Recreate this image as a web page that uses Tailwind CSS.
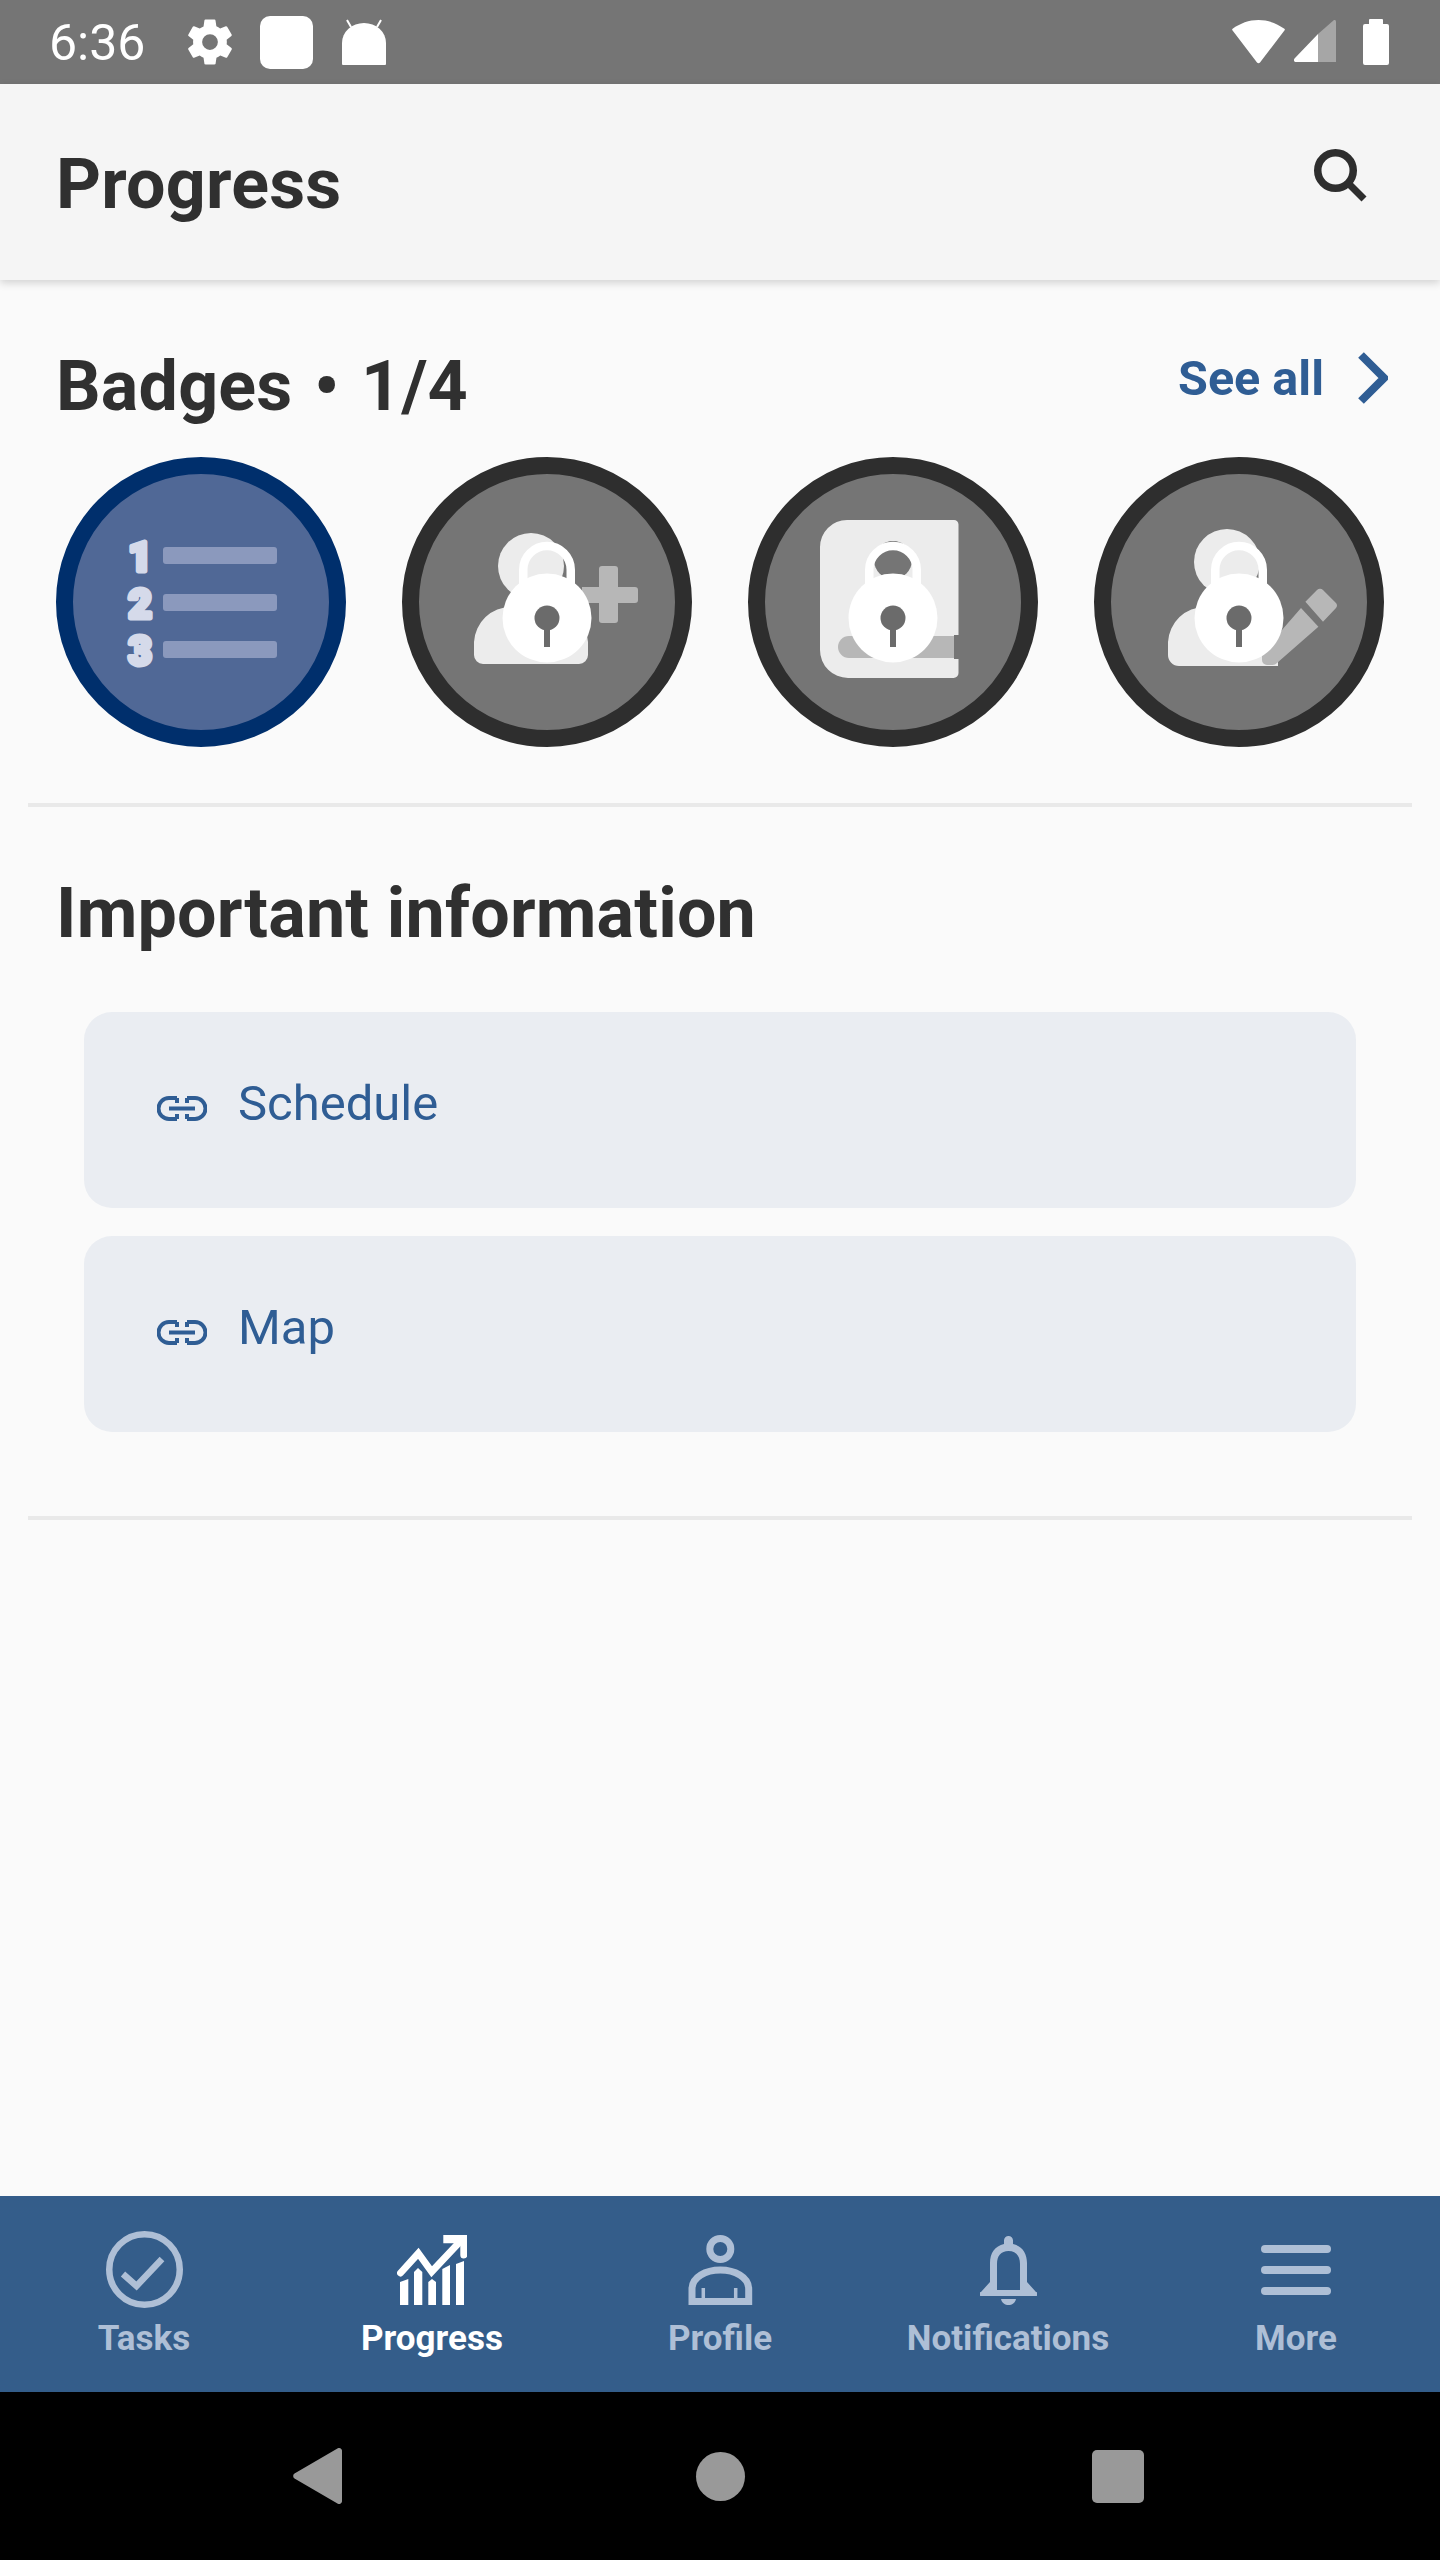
<!DOCTYPE html>
<html lang="en">
<head>
  <meta charset="UTF-8">
  <title>Progress</title>
  <script src="https://cdn.jsdelivr.net/npm/@tailwindcss/browser@4"></script>
</head>
<body class="bg-[#fafafa]">
  <!-- shared lock for the locked badges -->
  <svg class="hidden" width="0" height="0">
    <defs>
      <g id="lock">
        <path d="M121.250 140 V112.750 a23.750 23.750 0 0 1 47.500 0 V140" fill="none" stroke="#fff" stroke-width="8.500"/>
        <circle cx="145" cy="161" r="44.500" fill="#fff"/>
        <circle cx="145" cy="161" r="12.500" fill="#6b6b6b"/>
        <rect x="142" y="165" width="6" height="25" fill="#6b6b6b"/>
      </g>
    </defs>
  </svg>

  <div class="w-[1440px] h-[2560px] flex flex-col font-['Roboto',sans-serif] overflow-hidden">
    <!-- status bar -->
    <div class="h-[84px] bg-[#757575] flex items-center pl-[49px] pr-[51px] text-white shrink-0">
      <span class="text-[50px] leading-[84px] w-[96px] mt-[2px]">6:36</span>
      <svg class="ml-[38px]" width="54" height="54" viewBox="0 0 24 24" fill="#fff"><path fill-rule="evenodd" d="M19.400 13c.05-.33.08-.66.08-1s-.03-.67-.08-1l2.100-1.650c.2-.15.25-.42.12-.64l-2-3.460c-.12-.22-.39-.3-.61-.22l-2.490 1c-.52-.4-1.080-.73-1.690-.98l-.38-2.650A.49.49 0 0 0 14 2h-4c-.25 0-.46.18-.49.42l-.38 2.650c-.61.25-1.170.59-1.690.98l-2.490-1a.5.5 0 0 0-.61.22l-2 3.460c-.13.22-.07.49.12.64L4.560 11c-.05.33-.08.67-.08 1s.03.67.08 1l-2.100 1.650c-.2.15-.25.42-.12.64l2 3.460c.12.22.39.3.61.22l2.490-1c.52.4 1.080.73 1.690.98l.38 2.650c.03.24.24.42.49.42h4c.25 0 .46-.18.49-.42l.38-2.650c.61-.25 1.170-.59 1.690-.98l2.490 1c.23.09.49 0 .61-.22l2-3.460c.13-.22.07-.49-.12-.64L19.400 13zM12 15.500a3.500 3.500 0 1 1 0-7 3.500 3.500 0 0 1 0 7z"/></svg>
      <div class="ml-[23px] w-[53px] h-[53px] bg-white rounded-[10px]"></div>
      <svg class="ml-[29px]" width="44" height="46" viewBox="0 0 44 46" fill="#fff"><path d="M0 45 V24 a22 20 0 0 1 44 0 V45 a1 1 0 0 1 -1 1 H1 a1 1 0 0 1 -1 -1z"/><path d="M9 8 L5 1 M35 8 L39 1" stroke="#fff" stroke-width="2" fill="none"/></svg>

      <svg class="ml-auto" width="53" height="44" viewBox="0 0 53 44" fill="#fff"><path d="M0.600 8.800 C8 3.400 17 0 26.500 0 S45 3.400 52.400 8.800 C53 9.300 53 9.800 52.600 10.300 L28 42.600 C27.200 43.600 25.800 43.600 25 42.600 L0.400 10.300 C0 9.800 0 9.300 .6 8.800z"/></svg>
      <svg class="ml-[9px]" width="42" height="44" viewBox="0 0 42 44"><path d="M24 14 L1 38 C-1 40 0 42 2 42 H24z" fill="#fff"/><path d="M24 14 L40 0 C41 -.5 42 .5 42 2 V42 H24z" fill="#a6a6a6"/></svg>
      <svg class="ml-[27px]" width="26" height="46" viewBox="0 0 26 46" fill="#fff"><path d="M6 5 V1 a1 1 0 0 1 1 -1 H19 a1 1 0 0 1 1 1 V5 H24 a2 2 0 0 1 2 2 V44 a2 2 0 0 1 -2 2 H2 a2 2 0 0 1 -2 -2 V7 a2 2 0 0 1 2 -2z"/></svg>
    </div>

    <!-- app bar -->
    <div class="h-[196px] bg-[#f5f5f5] flex items-center justify-between pl-[56px] pr-[73px] shrink-0 shadow-[0_3px_8px_rgba(0,0,0,0.16)] relative">
      <h1 class="text-[70px] leading-[84px] font-bold tracking-[0.2px] text-[#303030] mt-[4px]">Progress</h1>
      <svg class="mb-[14px]" width="53" height="53" viewBox="0 0 53 53" fill="none" stroke="#2e2e2e"><circle cx="21.500" cy="21.500" r="17.750" stroke-width="7.500"/><path d="M34 34 L50 50" stroke-width="7"/></svg>
    </div>

    <!-- badges -->
    <section class="pt-[64px]">
      <div class="flex justify-between pl-[56px] pr-[52px] h-[85px]">
        <h2 class="text-[70px] leading-[84px] font-bold tracking-[0.2px] text-[#303030]">Badges <span class="ml-[4px] mr-[4px]">•</span> 1/4</h2>
        <div class="flex items-start text-[#2f5d94]">
          <span class="text-[48.500px] leading-[56px] font-bold mt-[7px]">See all</span>
          <svg class="ml-[34px] mt-[8px]" width="30" height="52" viewBox="0 0 30 52" fill="none" stroke="#2f5d94" stroke-width="8"><path d="M3 3 L26 26 L3 49"/></svg>
        </div>
      </div>
      <div class="flex gap-[56px] pl-[56px] mt-[28px]">
        <svg width="290" height="290" viewBox="0 0 290 290">
          <circle cx="145" cy="145" r="136.500" fill="#506896" stroke="#002f6c" stroke-width="17"/>
          <rect x="107" y="90" width="114" height="17" rx="3" fill="#8b99bd"/>
          <rect x="107" y="137" width="114" height="17" rx="3" fill="#8b99bd"/>
          <rect x="107" y="184" width="114" height="17" rx="3" fill="#8b99bd"/>
          <g fill="#d5daea" stroke="#d5daea" stroke-width="5" stroke-linejoin="round" font-size="40" font-weight="900" text-anchor="middle">
            <text x="84" y="113.500">1</text>
            <text x="84" y="160.500">2</text>
            <text x="84" y="207.500">3</text>
          </g>
        </svg>
        <svg width="290" height="290" viewBox="0 0 290 290">
          <circle cx="145" cy="145" r="136.500" fill="#757575" stroke="#2e2e2e" stroke-width="17"/>
          <path d="M72 198 V185 a37 37 0 0 1 37 -35 h40 a37 37 0 0 1 37 35 V198 a9 9 0 0 1 -9 9 H81 a9 9 0 0 1 -9 -9z" fill="#ececec"/>
          <circle cx="129" cy="109" r="33" fill="#ececec"/>
          <path d="M197 112 a3 3 0 0 1 3 -3 h13 a3 3 0 0 1 3 3 v18 h17 a3 3 0 0 1 3 3 v10 a3 3 0 0 1 -3 3 h-17 v17 a3 3 0 0 1 -3 3 h-13 a3 3 0 0 1 -3 -3 v-17 h-17 v-16 h17z" fill="#b7b7b7"/>
          <use href="#lock"/>
        </svg>
        <svg width="290" height="290" viewBox="0 0 290 290">
          <circle cx="145" cy="145" r="136.500" fill="#757575" stroke="#2e2e2e" stroke-width="17"/>
          <path d="M72 90 a27 27 0 0 1 27 -27 H206 a4.500 4.500 0 0 1 4.500 4.500 V216 a5 5 0 0 1 -5 5 H100 a28 28 0 0 1 -28 -28z" fill="#ececec"/>
          <rect x="206" y="178" width="6" height="24" fill="#757575"/>
          <path d="M101 179 H206 V201 H101 a11 11 0 0 1 0 -22z" fill="#b7b7b7"/>
          <circle cx="145" cy="103" r="19" fill="#757575"/>
          <use href="#lock"/>
        </svg>
        <svg width="290" height="290" viewBox="0 0 290 290">
          <circle cx="145" cy="145" r="136.500" fill="#757575" stroke="#2e2e2e" stroke-width="17"/>
          <path d="M74 198 V185 a37 37 0 0 1 37 -35 h40 a37 37 0 0 1 33 25 V209 H85 a11 11 0 0 1 -11 -11z" fill="#ececec"/>
          <circle cx="133" cy="105" r="33" fill="#ececec"/>
          <path d="M207 151 L224.400 169.700 L183 206 a6 6 0 0 1 -5 2 H173 a5 5 0 0 1 -5 -5 V196z" fill="#b7b7b7"/>
          <path d="M211.400 144.700 L223 133 a4 4 0 0 1 6 0 L242 146 a4 4 0 0 1 0 5 L229 164.700z" fill="#b7b7b7"/>
          <use href="#lock"/>
        </svg>
      </div>
      <div class="h-[4px] bg-[#e9e9e9] mx-[28px] mt-[56px]"></div>
    </section>

    <!-- important information -->
    <section>
      <h2 class="text-[70px] leading-[84px] font-bold tracking-[0.2px] text-[#303030] pl-[56px] mt-[64px]">Important information</h2>
      <div class="flex flex-col gap-[28px] mx-[84px] mt-[57px]">
        <a class="h-[196px] bg-[#eaedf2] rounded-[28px] flex items-start pl-[73px] text-[#2f5d94]">
          <svg class="mt-[84px]" width="50" height="25" viewBox="0 0 50 25" fill="none" stroke="#2f5d94" stroke-width="4"><path d="M20 2 H12 a10.500 10.500 0 0 0 0 21 H20 M30 2 H38 a10.500 10.500 0 0 1 0 21 H30 M12 12.500 H38"/><path d="M20 2 v5 M30 2 v5 M20 23 v-5 M30 23 v-5"/></svg>
          <span class="text-[49px] leading-[60px] ml-[31px] mt-[62px]">Schedule</span>
        </a>
        <a class="h-[196px] bg-[#eaedf2] rounded-[28px] flex items-start pl-[73px] text-[#2f5d94]">
          <svg class="mt-[84px]" width="50" height="25" viewBox="0 0 50 25" fill="none" stroke="#2f5d94" stroke-width="4"><path d="M20 2 H12 a10.500 10.500 0 0 0 0 21 H20 M30 2 H38 a10.500 10.500 0 0 1 0 21 H30 M12 12.500 H38"/><path d="M20 2 v5 M30 2 v5 M20 23 v-5 M30 23 v-5"/></svg>
          <span class="text-[49px] leading-[60px] ml-[31px] mt-[62px]">Map</span>
        </a>
      </div>
      <div class="h-[4px] bg-[#e9e9e9] mx-[28px] mt-[84px]"></div>
    </section>

    <!-- tab bar -->
    <nav class="mt-auto h-[196px] bg-[#345d8a] grid grid-cols-5 shrink-0 text-[#aebfd6] text-[35px] leading-[42px] font-bold text-center">
      <div class="flex flex-col items-center pt-[35px]">
        <svg width="77" height="77" viewBox="0 0 77 77" fill="none" stroke="#aebfd6" stroke-width="6.500"><circle cx="38.500" cy="38.500" r="35.250"/><path d="M17 43 L30.500 55 L56 28"/></svg>
        <span class="mt-[10px]">Tasks</span>
      </div>
      <div class="flex flex-col items-center pt-[35px] text-white">
        <svg width="70" height="77" viewBox="0 0 70 77" fill="#fff"><path d="M3.500 42 L21.300 22.300 L34.700 40.700 L63 10.700" fill="none" stroke="#fff" stroke-width="7" stroke-linecap="round"/><path d="M46.300 4 H70.300 V24 a3.500 3.500 0 0 1 -7 0 V12.300 H46.300z"/><path d="M3 51 L11.300 48 V74 H3z"/><path d="M17 41 L21 37 L25.300 41 V74 H17z"/><path d="M31.300 51 L35 48 L39 51 V74 H31.300z"/><path d="M45.300 38 L53 34 V74 H45.300z"/><path d="M59 33 L67 30 V74 H59z"/></svg>
        <span class="mt-[10px]">Progress</span>
      </div>
      <div class="flex flex-col items-center pt-[35px]">
        <svg width="65" height="77" viewBox="0 0 65 77" fill="none" stroke="#aebfd6" stroke-width="7"><circle cx="32.300" cy="18" r="10.500"/><path d="M4 70.500 V58 C4 46 18 39 32.300 39 S60.700 46 60.700 58 V70.500z"/><path d="M15.300 57 V68 M47.700 57 V68" stroke-width="3.500"/></svg>
        <span class="mt-[10px]">Profile</span>
      </div>
      <div class="flex flex-col items-center pt-[35px]">
        <svg width="57" height="77" viewBox="0 0 57 77" fill="#aebfd6"><path fill-rule="evenodd" d="M28.500 5 a4.500 4.500 0 0 1 4.500 4.500 V13 C42 15 47 22 47 32 V51 L56 61 a2 2 0 0 1 0 4 H1 a2 2 0 0 1 0 -4 L10 51 V32 C10 22 15 15 24 13 V9.500 A4.500 4.500 0 0 1 28.500 5z M28.500 20 C21 20 17 25 17 33 V59 H40 V33 C40 25 36 20 28.500 20z"/><path d="M21 68 H36 C35 72 32 74 28.500 74 S22 72 21 68z"/></svg>
        <span class="mt-[10px]">Notifications</span>
      </div>
      <div class="flex flex-col items-center pt-[35px]">
        <svg width="70" height="77" viewBox="0 0 70 77" fill="#aebfd6"><rect x="0" y="14" width="70" height="8" rx="4"/><rect x="0" y="35" width="70" height="8" rx="4"/><rect x="0" y="56" width="70" height="8" rx="4"/></svg>
        <span class="mt-[10px]">More</span>
      </div>
    </nav>

    <!-- android nav -->
    <div class="h-[168px] bg-black flex items-center shrink-0 relative">
      <svg class="ml-[293px]" width="49" height="56" viewBox="0 0 49 56" fill="#999"><path d="M1.500 25.500 L44 .800 a3 3 0 0 1 5 2.500 V52.700 a3 3 0 0 1 -5 2.500 L1.500 30.500 a3 3 0 0 1 0 -5z"/></svg>
      <div class="ml-[354px] w-[49px] h-[49px] rounded-full bg-[#999]"></div>
      <div class="ml-[347px] w-[52px] h-[53px] rounded-[5px] bg-[#999]"></div>
    </div>
  </div>
</body>
</html>
